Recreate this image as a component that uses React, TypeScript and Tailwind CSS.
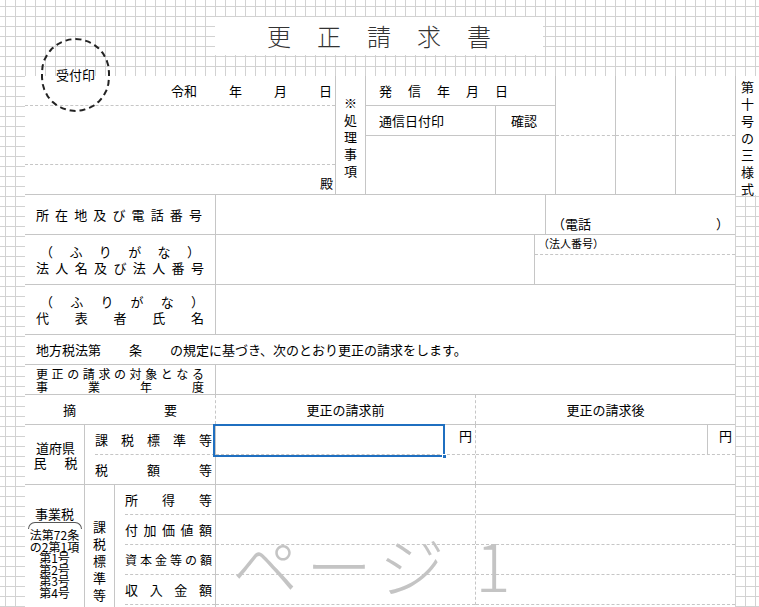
import React from "react";

const B = "border-[#c6c6c6]";

function Spread({ text, className = "" }: { text: string; className?: string }) {
  return (
    <div className={`flex justify-between ${className}`}>
      {Array.from(text).map((c, i) => (
        <span key={i}>{c}</span>
      ))}
    </div>
  );
}

function VText({ text, className = "" }: { text: string; className?: string }) {
  return (
    <div className={`flex flex-col items-center leading-[17px] ${className}`}>
      {Array.from(text).map((c, i) => (
        <span key={i}>{c}</span>
      ))}
    </div>
  );
}

export default function App() {
  return (
    <div
      className="relative w-[759px] h-[607px] overflow-hidden bg-white text-[13px] text-black"
      style={{
        fontFamily: '"MS PGothic","Noto Sans CJK JP",sans-serif',
      }}
    >
      <div className="absolute inset-0 bg-[linear-gradient(to_right,#d2d2d2_1px,transparent_1px),linear-gradient(to_bottom,#d2d2d2_1px,transparent_1px)] bg-[size:10px_10px] bg-[position:5px_6px]" />
      <div className="relative flex flex-col">
        <div className="h-[76px] flex items-start">
          <div className="ml-[215px] mt-[17px] w-[328px] h-[38px] bg-white flex items-center justify-center pl-[26px] text-[24px] tracking-[26px] text-[#333] font-light" style={{ fontFamily: '"Noto Sans CJK JP",serif' }}>
            更正請求書
          </div>
        </div>
        <div className="flex ml-[25px]">
          <div className={`flex bg-white w-[710px] h-[119px] border-b ${B}`}>
            <div className="w-[310px] flex flex-col">
              <div className="h-[29px] flex items-center justify-end pr-[3px]">
                <span className="mr-[32px]">令和</span>
                <span className="mr-[32px]">年</span>
                <span className="mr-[32px]">月</span>
                <span>日</span>
              </div>
              <div className={`h-[60px] border-t border-dashed ${B}`} />
              <div className={`h-[30px] border-t border-dashed ${B} flex items-end justify-end pr-[2px] pb-[2px]`}>殿</div>
            </div>
            <div className={`w-[30px] border-l ${B} pt-[18px]`}>
              <VText text="※処理事項" className="leading-[16px]" />
            </div>
            <div className={`w-[190px] border-l ${B} flex flex-col`}>
              <div className="h-[29px] flex items-center pl-[13px] gap-[16px]">
                <span>発</span><span>信</span><span>年</span><span>月</span><span>日</span>
              </div>
              <div className={`h-[30px] flex border-t ${B}`}>
                <div className={`w-[130px] border-r ${B} flex items-center pl-[13px]`}>通信日付印</div>
                <div className="flex-1 flex items-center pl-[15px]">確認</div>
              </div>
              <div className={`flex-1 flex border-t ${B}`}>
                <div className={`w-[130px] border-r ${B}`} />
              </div>
            </div>
            {[0, 1, 2].map((i) => (
              <div key={i} className={`w-[60px] border-l ${B} flex flex-col`}>
                <div className="h-[59px]" />
                <div className={`flex-1 border-t border-dashed ${B}`} />
              </div>
            ))}
          </div>
          <div className={`w-[24px] h-[119px] bg-white border-l ${B} pt-[2px]`}>
            <VText text="第十号の三様式" className="leading-[15.5px]" />
          </div>
        </div>
        <div className="ml-[25px] w-[710px] flex flex-col bg-white">
          <div className={`flex h-[40px] border-b ${B}`}>
            <div className="w-[190px] px-[11px] flex items-center"><Spread text="所在地及び電話番号" className="w-full pr-[2px]" /></div>
            <div className={`w-[330px] border-l ${B}`} />
            <div className={`flex-1 border-l ${B} flex items-end justify-between px-[6px] pb-[1px]`}>
              <span>（電話</span><span>）</span>
            </div>
          </div>
          <div className={`flex h-[50px] border-b ${B}`}>
            <div className="w-[190px] px-[11px] flex flex-col justify-center leading-[16px]">
              <Spread text="（ふりがな）" className="px-[4px]" />
              <Spread text="法人名及び法人番号" />
            </div>
            <div className={`w-[319px] border-l ${B}`} />
            <div className={`flex-1 border-l ${B} flex flex-col`}>
              <div className={`h-[20px] text-[11px] border-b border-dashed ${B} pl-[3px]`}>（法人番号）</div>
            </div>
          </div>
          <div className={`flex h-[50px] border-b ${B}`}>
            <div className="w-[190px] px-[11px] flex flex-col justify-center leading-[16px]">
              <Spread text="（ふりがな）" className="pl-[4px]" />
              <Spread text="代表者氏名" />
            </div>
            <div className={`flex-1 border-l ${B}`} />
          </div>
          <div className={`flex h-[30px] border-b ${B} items-center pl-[11px]`}>
            地方税法第<span className="ml-[28px] mr-[28px]">条</span>の規定に基づき、次のとおり更正の請求をします。
          </div>
          <div className={`flex h-[30px] border-b ${B}`}>
            <div className="w-[190px] px-[11px] flex flex-col justify-center leading-[13px] text-[12px]">
              <Spread text="更正の請求の対象となる" />
              <Spread text="事業年度" />
            </div>
            <div className={`flex-1 border-l ${B}`} />
          </div>
          <div className={`flex h-[30px] border-b ${B}`}>
            <div className="w-[190px] flex items-center justify-between px-[38px]"><span>摘</span><span>要</span></div>
            <div className={`w-[260px] border-l border-dashed ${B} flex items-center justify-center`}>更正の請求前</div>
            <div className={`flex-1 border-l border-dashed ${B} flex items-center justify-center`}>更正の請求後</div>
          </div>
          <div className={`flex h-[60px] border-b ${B}`}>
            <div className={`w-[60px] border-r ${B} flex flex-col items-center justify-center leading-[15px] pl-[2px]`}>
              <span>道府県</span>
              <span className="w-[44px] flex justify-between"><span>民</span><span>税</span></span>
            </div>
            <div className="w-[130px] flex flex-col pl-[10px]">
              <div className={`h-[30px] border-b border-dashed ${B} flex items-center pr-[3px]`}><Spread text="課税標準等" className="w-full" /></div>
              <div className="h-[30px] flex items-center pr-[3px]"><Spread text="税額等" className="w-full" /></div>
            </div>
            <div className={`w-[260px] border-l ${B} flex flex-col`}>
              <div className={`h-[30px] border-b border-dashed ${B} flex justify-end pr-[3px] pt-[1px]`}>円</div>
            </div>
            <div className={`flex-1 border-l border-dashed ${B} flex flex-col`}>
              <div className={`h-[30px] border-b border-dashed ${B} flex justify-end`}>
                <div className={`w-[28px] border-l ${B} flex justify-end pr-[3px] pt-[1px]`}>円</div>
              </div>
            </div>
          </div>
          <div className="flex h-[130px]">
            <div className={`w-[60px] border-r ${B} flex flex-col items-center pt-[22px] leading-[11.5px] text-[12px]`}>
              <span className="text-[13px] leading-[14px]">事業税</span>
              <span className="w-[54px] h-[7px] border-t border-l border-r border-[#555] rounded-t-[8px] mt-[1px]" />
              <span>法第72条</span>
              <span>の2第1項</span>
              <span>第1号</span>
              <span>第2号</span>
              <span>第3号</span>
              <span>第4号</span>
            </div>
            <div className={`w-[30px] border-r ${B} pt-[33px]`}>
              <VText text="課税標準等" className="leading-[16px]" />
            </div>
            <div className="w-[100px] flex flex-col pl-[10px]">
              {["所得等", "付加価値額", "資本金等の額", "収入金額"].map((t, i) => (
                <div key={t} className={`h-[30px] border-b border-dashed ${B} flex items-center pr-[3px] ${i === 2 ? "text-[12px]" : ""}`}>
                  <Spread text={t} className="w-full" />
                </div>
              ))}
            </div>
            <div className={`w-[260px] border-l ${B} flex flex-col`}>
              {[0, 1, 2, 3].map((i) => (
                <div key={i} className={`h-[30px] ${i === 0 ? "border-b" : "border-b border-dashed"} ${B}`} />
              ))}
            </div>
            <div className={`flex-1 border-l border-dashed ${B} flex flex-col`}>
              {[0, 1, 2, 3].map((i) => (
                <div key={i} className={`h-[30px] ${i === 0 ? "border-b" : "border-b border-dashed"} ${B}`} />
              ))}
            </div>
          </div>
        </div>
      </div>
      <div className="absolute left-[41px] top-[38px] w-[69px] h-[74px] rounded-full border-[2px] border-dashed border-[#222] flex items-center justify-center text-[13px]">
        受付印
      </div>
      <div className="absolute left-[213px] top-[424px] w-[232px] h-[33px] border-2 border-[#1f6fc0]">
        <div className="absolute right-[-4px] bottom-[-4px] w-[5px] h-[5px] bg-[#1f6fc0] border border-white" />
      </div>
      <div className="absolute left-[232px] top-[530px] text-[66px] leading-none text-[#c4c4c4] tracking-[8px] whitespace-nowrap" style={{ fontFamily: '"Noto Sans CJK JP",sans-serif', fontWeight: 300 }}>
        ページ 1
      </div>
    </div>
  );
}
